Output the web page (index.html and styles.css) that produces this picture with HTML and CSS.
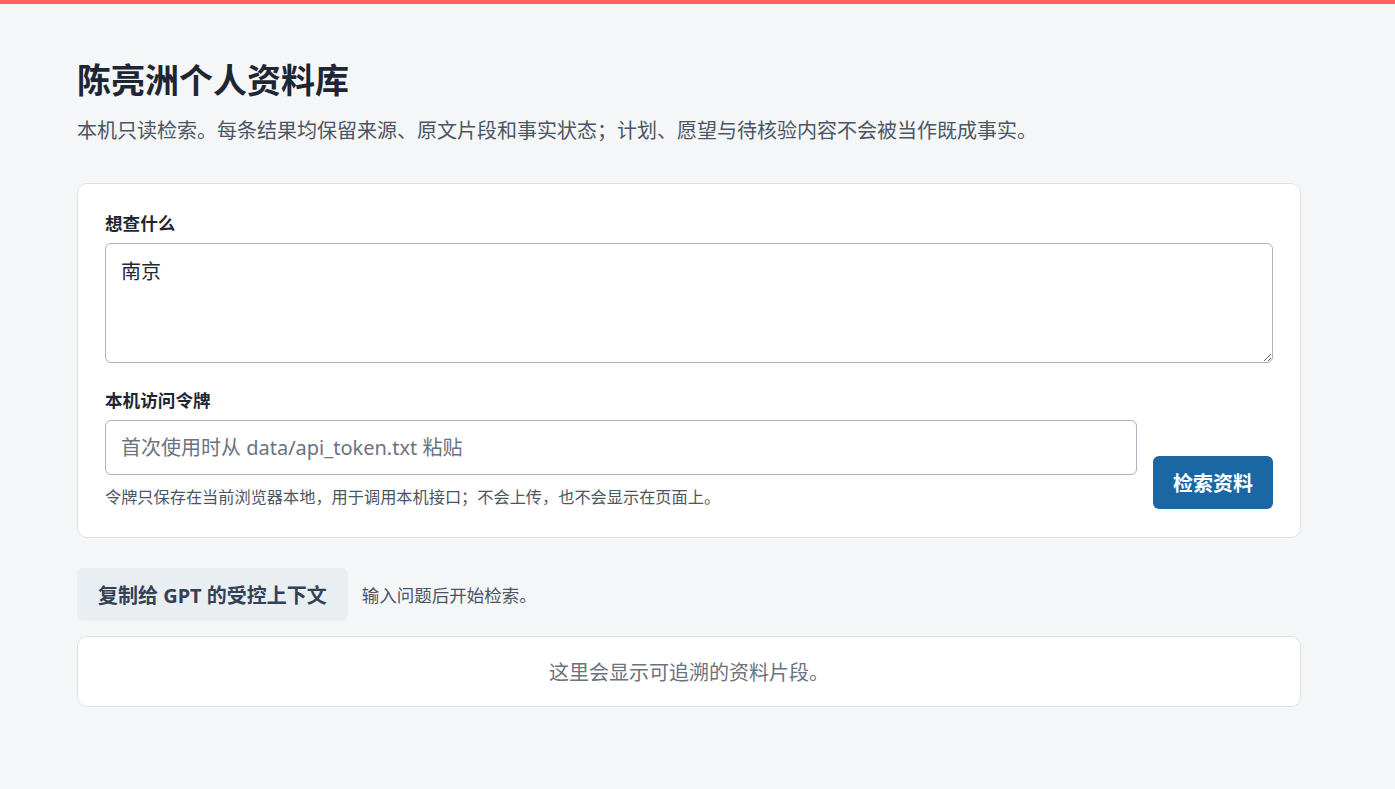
FILE: index.html
```html
<!DOCTYPE html>
<html lang="zh-CN">
<head>
  <meta charset="UTF-8">
  <title>陈亮洲个人资料库</title>
  <link rel="stylesheet" href="styles.css">
</head>
<body>
  <div class="topbar"></div>
  <main class="page">
    <h1>陈亮洲个人资料库</h1>
    <p class="intro">本机只读检索。每条结果均保留来源、原文片段和事实状态；计划、愿望与待核验内容不会被当作既成事实。</p>

    <form class="card" id="searchForm">
      <label class="label" for="query">想查什么</label>
      <textarea id="query" class="query">南京</textarea>

      <label class="label" for="token">本机访问令牌</label>
      <div class="token-row">
        <div class="token-field">
          <input id="token" class="token" type="password" placeholder="首次使用时从 data/api_token.txt 粘贴">
          <p class="hint">令牌只保存在当前浏览器本地，用于调用本机接口；不会上传，也不会显示在页面上。</p>
        </div>
        <button type="submit" class="btn">检索资料</button>
      </div>
    </form>

    <div class="actions">
      <button type="button" class="btn-soft">复制给 GPT 的受控上下文</button>
      <span class="status">输入问题后开始检索。</span>
    </div>

    <div class="results">这里会显示可追溯的资料片段。</div>
  </main>
</body>
</html>
```

FILE: styles.css
```css
body {
  margin: 0;
  font-family: "Noto Sans", "Noto Sans CJK SC", sans-serif;
  background: #f5f6f8;
  color: #1f2937;
}

.topbar {
  height: 4px;
  background: #ff6161;
}

.page {
  width: 1224px;
  margin: 0 0 0 77px;
  padding-top: 54px;
}

h1 {
  margin: 0;
  font-size: 34px;
  line-height: 44px;
  font-weight: 700;
  color: #1f2633;
}

.intro {
  margin: 14px 0 0;
  font-size: 20px;
  line-height: 30px;
  color: #4b5563;
}

.card {
  margin-top: 37px;
  background: #fff;
  border: 1px solid #dde1e6;
  border-radius: 10px;
  padding: 26px 27px 28px;
  display: flex;
  flex-direction: column;
}

.label {
  font-size: 17.6px;
  line-height: 26px;
  font-weight: 700;
  color: #1f2633;
  margin-bottom: 7px;
}

.query {
  height: 120px;
  box-sizing: border-box;
  border: 1px solid #a9b4c2;
  border-radius: 6px;
  padding: 13px 15px;
  font-family: inherit;
  font-size: 20px;
  line-height: 30px;
  color: #1f2937;
  resize: vertical;
  margin-bottom: 24px;
}

.token-row {
  display: flex;
  align-items: flex-end;
  gap: 16px;
}

.token-field {
  flex: 1;
}

.token {
  display: block;
  width: 100%;
  box-sizing: border-box;
  height: 55px;
  border: 1px solid #a9b4c2;
  border-radius: 6px;
  padding: 0 15px;
  font-family: inherit;
  font-size: 20px;
}

.token::placeholder {
  color: #6b7280;
}

.hint {
  margin: 10px 0 0;
  font-size: 16.2px;
  line-height: 24px;
  color: #4b5563;
}

.btn {
  width: 120px;
  height: 53px;
  border: none;
  border-radius: 6px;
  background: #1a67a3;
  color: #fff;
  font-family: inherit;
  font-size: 20px;
  font-weight: 700;
  cursor: pointer;
}

.actions {
  margin-top: 30px;
  display: flex;
  align-items: center;
  gap: 14px;
}

.btn-soft {
  height: 53px;
  padding: 0 21px;
  border: none;
  border-radius: 6px;
  background: #e9eef3;
  color: #334155;
  font-family: inherit;
  font-size: 20px;
  font-weight: 700;
  cursor: pointer;
}

.status {
  font-size: 17.5px;
  color: #4b5563;
}

.results {
  margin-top: 15px;
  background: #fff;
  border: 1px solid #dde1e6;
  border-radius: 10px;
  height: 69px;
  display: flex;
  align-items: center;
  justify-content: center;
  font-size: 20px;
  color: #6b7280;
}
```
